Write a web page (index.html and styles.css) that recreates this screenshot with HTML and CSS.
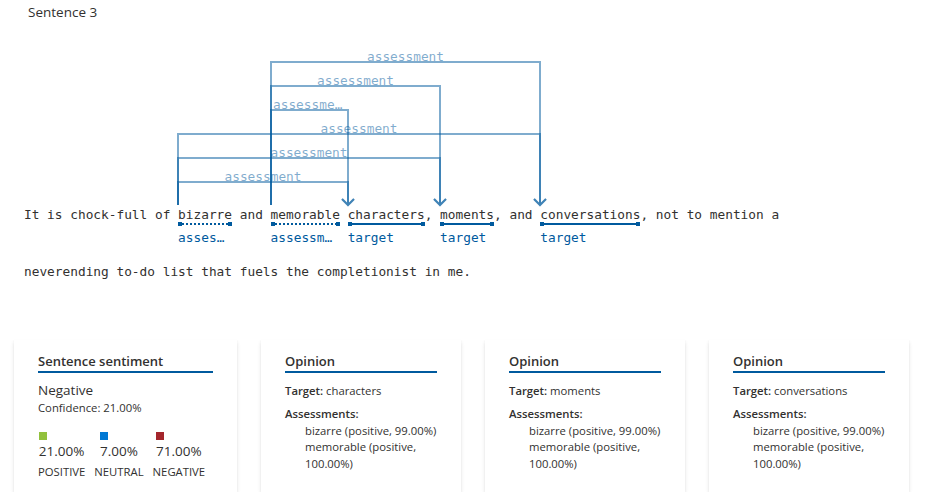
FILE: index.html
```html
<!DOCTYPE html>
<html lang="en">
<head>
    <meta charset="UTF-8">
    <meta name="viewport" content="width=device-width, initial-scale=1.0">
    <title>Sentence 3</title>
    <link rel="stylesheet" href="styles.css">
</head>
<body>

    <div class="sentence-header">Sentence 3</div>

    <div class="sentence">
        <!-- opinion relations: assessment -> target -->
        <svg class="arcs" width="933" height="190" viewBox="0 0 933 190">
            <g fill="none" stroke="#005a9e" stroke-opacity="0.5" stroke-width="2">
                <path d="M271 184V41H540V184M534 178L540 184L546 178"/>
                <path d="M271 184V65H440V184M434 178L440 184L446 178"/>
                <path d="M271 184V89H348V184M342 178L348 184L354 178"/>
                <path d="M178 184V113H540V184M534 178L540 184L546 178"/>
                <path d="M178 184V137H440V184M434 178L440 184L446 178"/>
                <path d="M178 184V161H348V184M342 178L348 184L354 178"/>
            </g>
        </svg>
        <div class="arc-label" style="left:271px;top:28px;width:269px">assessment</div>
        <div class="arc-label" style="left:271px;top:52px;width:169px">assessment</div>
        <div class="arc-label" style="left:271px;top:76px;width:77px">assessment</div>
        <div class="arc-label" style="left:178px;top:100px;width:362px">assessment</div>
        <div class="arc-label" style="left:178px;top:124px;width:262px">assessment</div>
        <div class="arc-label" style="left:178px;top:148px;width:170px">assessment</div>

        <div class="line">It is chock-full of <span class="tok tok-assess"><span class="tok-word">bizarre</span><span class="tok-bar"></span><span class="tok-tag">assessment</span></span> and <span class="tok tok-assess"><span class="tok-word">memorable</span><span class="tok-bar"></span><span class="tok-tag">assessment</span></span> <span class="tok"><span class="tok-word">characters</span><span class="tok-bar"></span><span class="tok-tag">target</span></span>, <span class="tok"><span class="tok-word">moments</span><span class="tok-bar"></span><span class="tok-tag">target</span></span>, and <span class="tok"><span class="tok-word">conversations</span><span class="tok-bar"></span><span class="tok-tag">target</span></span>, not to mention a</div>
        <div class="line line-next">neverending to-do list that fuels the completionist in me.</div>
    </div>

    <div class="cards">
        <div class="card card-sentiment">
            <div class="card-title">Sentence sentiment</div>
            <div class="sentiment-label">Negative</div>
            <div class="confidence">Confidence: 21.00%</div>
            <div class="dist">
                <div class="dist-col">
                    <div class="dist-val">
                        <span class="swatch swatch-positive"></span>
                        <span class="pct">21.00%</span>
                    </div>
                    <div class="dist-name">POSITIVE</div>
                </div>
                <div class="dist-col">
                    <div class="dist-val">
                        <span class="swatch swatch-neutral"></span>
                        <span class="pct">7.00%</span>
                    </div>
                    <div class="dist-name">NEUTRAL</div>
                </div>
                <div class="dist-col">
                    <div class="dist-val">
                        <span class="swatch swatch-negative"></span>
                        <span class="pct">71.00%</span>
                    </div>
                    <div class="dist-name">NEGATIVE</div>
                </div>
            </div>
        </div>

        <div class="card">
            <div class="card-title">Opinion</div>
            <div class="opinion-target"><b>Target:</b> characters</div>
            <div class="opinion-heading">Assessments:</div>
            <ul class="assess-list">
                <li>bizarre (positive, 99.00%)</li>
                <li>memorable (positive, 100.00%)</li>
            </ul>
        </div>

        <div class="card">
            <div class="card-title">Opinion</div>
            <div class="opinion-target"><b>Target:</b> moments</div>
            <div class="opinion-heading">Assessments:</div>
            <ul class="assess-list">
                <li>bizarre (positive, 99.00%)</li>
                <li>memorable (positive, 100.00%)</li>
            </ul>
        </div>

        <div class="card">
            <div class="card-title">Opinion</div>
            <div class="opinion-target"><b>Target:</b> conversations</div>
            <div class="opinion-heading">Assessments:</div>
            <ul class="assess-list">
                <li>bizarre (positive, 99.00%)</li>
                <li>memorable (positive, 100.00%)</li>
            </ul>
        </div>
    </div>

</body>
</html>
```

FILE: styles.css
```css
:root {
    --text: #323130;
    --theme-dark: #005a9e;
    --arc: rgba(0, 90, 158, 0.5);
    --mono: "DejaVu Sans Mono", "Liberation Mono", monospace;
}

* {
    margin: 0;
    padding: 0;
    box-sizing: border-box;
}

body {
    background: #fff;
    color: var(--text);
    font-family: "Open Sans", "Noto Sans", sans-serif;
    font-size: 11.3px;
    width: 933px;
}

.sentence-header {
    padding: 3px 28px 0;
    font-size: 13.5px;
    line-height: 18px;
}

/* sentence with relation arcs */
.sentence {
    position: relative;
    padding-top: 186px;
    font-family: var(--mono);
    font-size: 12.8px;
}

.arcs {
    position: absolute;
    top: 0;
    left: 0;
}

.arc-label {
    position: absolute;
    height: 15px;
    line-height: 15px;
    padding: 0 2px;
    text-align: center;
    white-space: nowrap;
    overflow: hidden;
    text-overflow: ellipsis;
    color: var(--arc);
}

.line {
    padding-left: 24px;
    line-height: 16px;
    white-space: pre;
}

.line-next {
    margin-top: 17px;
}

.tok {
    display: inline-flex;
    flex-direction: column;
    vertical-align: baseline;
}

.tok-word {
    line-height: 16px;
}

.tok-bar {
    position: relative;
    height: 2px;
    background: var(--theme-dark);
}

.tok-assess .tok-bar {
    background: repeating-linear-gradient(90deg, var(--theme-dark) 0 2px, transparent 2px 4px);
}

.tok-bar::before,
.tok-bar::after {
    content: "";
    position: absolute;
    top: -1px;
    width: 4px;
    height: 4px;
    background: var(--theme-dark);
}

.tok-bar::before {
    left: 0;
}

.tok-bar::after {
    right: 0;
}

.tok-tag {
    width: 0;
    min-width: 100%;
    margin-top: 4px;
    padding-right: 2px;
    line-height: 18px;
    color: var(--theme-dark);
    white-space: nowrap;
    overflow: hidden;
    text-overflow: ellipsis;
}

/* cards */
.cards {
    display: flex;
    gap: 24px;
    margin-top: 60px;
    padding: 0 14px;
}

.card {
    width: 200px;
    padding: 12px 24px;
    background: #fff;
    box-shadow: 0 1.6px 3.6px rgba(0, 0, 0, 0.13), 0 0.3px 0.9px rgba(0, 0, 0, 0.11);
}

.card-sentiment {
    width: 223px;
}

.card-title {
    font-size: 13px;
    font-weight: 600;
    line-height: 19px;
    border-bottom: 2px solid var(--theme-dark);
}

.sentiment-label {
    margin-top: 7px;
    font-size: 13.5px;
    line-height: 20px;
}

.confidence {
    line-height: 16px;
}

.dist {
    display: flex;
    gap: 9px;
    margin-top: 16px;
}

.dist-col {
    display: flex;
    flex-direction: column;
    align-items: center;
}

.dist-val {
    display: flex;
    flex-direction: column;
    align-items: flex-start;
}

.swatch {
    width: 8px;
    height: 8px;
}

.swatch-positive {
    background: #92c13d;
}

.swatch-neutral {
    background: #0078d4;
}

.swatch-negative {
    background: #a4262c;
}

.pct {
    margin-top: 1px;
    font-size: 13.5px;
    line-height: 20px;
}

.dist-name {
    margin-top: 3px;
    line-height: 16px;
}

.opinion-target {
    margin-top: 10px;
    line-height: 16px;
}

.opinion-target b,
.opinion-heading {
    font-weight: 600;
}

.opinion-heading {
    margin-top: 7px;
    line-height: 16.5px;
}

.assess-list {
    list-style: none;
    padding-left: 20px;
    margin-right: -6px;
    line-height: 16.5px;
}
```
